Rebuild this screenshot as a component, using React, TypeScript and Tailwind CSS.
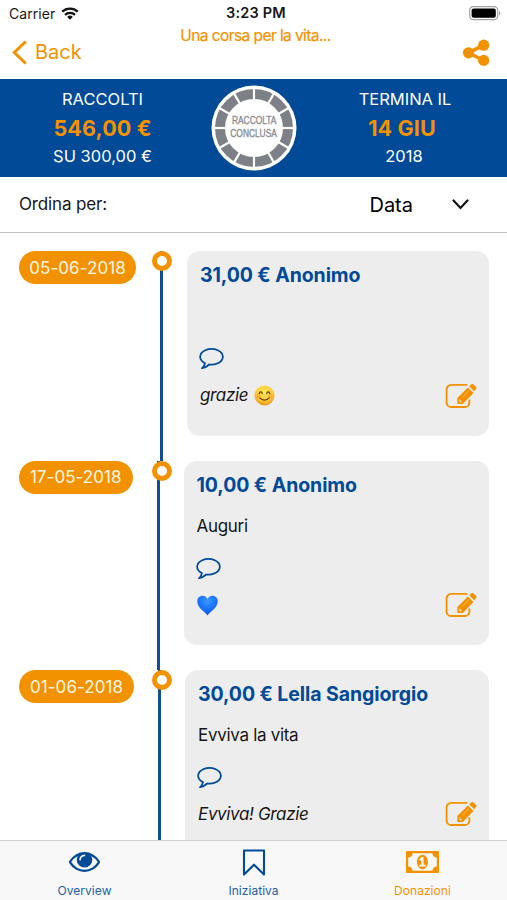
import React from 'react';

interface Donation {
  date: string;
  title: string;
  message?: string;
  reply: React.ReactNode;
  pillClass: string;
}

const WifiIcon = () => (
  <svg className="h-[13px] w-[18px]" viewBox="0 0 18 13" fill="none" stroke="#111" strokeWidth="2.3">
    <path d="M1.2 4.7a11.2 11.2 0 0 1 15.6 0" />
    <path d="M4 7.8a7.2 7.2 0 0 1 10 0" />
    <path d="M9 12.7 6.2 9.9a4 4 0 0 1 5.6 0z" fill="#111" stroke="none" />
  </svg>
);

const BatteryIcon = () => (
  <svg className="h-[15px] w-8" viewBox="0 0 32 15">
    <rect x=".7" y=".7" width="28" height="13" rx="3.6" fill="#fff" stroke="#a3a3a3" strokeWidth="1.2" />
    <rect x="2.6" y="2.6" width="24.2" height="9.2" rx="2" fill="#000" />
    <path d="M30 5v4.6c1.9-.8 1.9-3.8 0-4.6z" fill="#a3a3a3" />
  </svg>
);

const ShareIcon = () => (
  <svg className="h-7 w-7" viewBox="0 0 28 28" fill="#f39200">
    <path d="M21.6 6.2 6.6 13.8l15 7.7" fill="none" stroke="#f39200" strokeWidth="3.6" />
    <circle cx="6.5" cy="13.8" r="5.6" />
    <circle cx="21.7" cy="6.2" r="5.6" />
    <circle cx="21.7" cy="21.4" r="5.6" />
  </svg>
);

const CommentIcon = () => (
  <svg className="h-[21px] w-[25px]" viewBox="0 256 1792 1536" fill="#004a98">
    <path d="M896 384q-204 0-381.5 69.5t-282 187.5-104.5 255q0 112 71.5 213.5t201.5 175.5l87 50-27 96q-24 91-70 172 152-63 275-171l43-38 57 6q69 8 130 8 204 0 381.5-69.5t282-187.5 104.5-255-104.5-255-282-187.5-381.5-69.5zm896 512q0 174-120 321.5t-326 233-450 85.5q-70 0-145-8-198 175-460 242-49 14-114 22h-5q-15 0-27-10.5t-16-27.5v-1q-3-4-.5-12t2-10 4.5-9.5l6-9 7-8.5 8-9q7-8 31-34.5t34.5-38 31-39.5 32.5-51 27-59 26-76q-157-89-247.5-220t-90.5-281q0-174 120-321.5t326-233 450-85.5 450 85.5 326 233 120 321.5z" />
  </svg>
);

const EditIcon = () => (
  <svg className="h-[26px] w-8" viewBox="0 0 32 26" fill="none" stroke="#f39200">
    <path d="M21.5 1.9H6.2A4.6 4.6 0 0 0 1.6 6.5v12.9A4.6 4.6 0 0 0 6.2 24h13.6a4.6 4.6 0 0 0 4.6-4.6v-2.2" strokeWidth="1.9" strokeLinecap="round" />
    <path d="M12.3 20.9v-5.8L22.9 4.5l5.6 5.6-10.7 10.8z" fill="#f39200" stroke="none" />
    <path d="m24.2 3.3 1.9-1.9c.7-.7 1.8-.7 2.5 0l2.3 2.3c.7.7.7 1.8 0 2.5L29.2 8.3z" fill="#f39200" stroke="none" />
    <path d="m14.2 16.1 2.9 2.9-1.2.5-1.5-.8z" fill="#f7dfbb" stroke="none" />
    <path d="m17.4 14.2 6.6-6.6" stroke="#f9c078" strokeWidth=".8" />
  </svg>
);

const SmileEmoji = () => (
  <svg className="h-[21px] w-[21px]" viewBox="0 0 21 21">
    <defs>
      <radialGradient id="face" cx=".5" cy=".35" r=".65">
        <stop offset="0" stopColor="#ffe95c" />
        <stop offset=".65" stopColor="#ffca35" />
        <stop offset="1" stopColor="#eb9018" />
      </radialGradient>
    </defs>
    <circle cx="10.5" cy="10.5" r="10" fill="url(#face)" />
    <circle cx="4.4" cy="11.2" r="2.3" fill="#f88b3c" opacity=".45" />
    <circle cx="16.6" cy="11.2" r="2.3" fill="#f88b3c" opacity=".45" />
    <g fill="none" stroke="#6b3f12" strokeWidth="1.3" strokeLinecap="round">
      <path d="M5.2 8.6c.5-2.4 2.6-2.4 3.1 0M12.7 8.6c.5-2.4 2.6-2.4 3.1 0" />
      <path d="M5.8 12.9c2.4 3 7 3 9.4 0" />
    </g>
  </svg>
);

const HeartEmoji = () => (
  <svg className="h-[21px] w-[21px]" viewBox="0 0 21 21">
    <defs>
      <radialGradient id="heart" cx=".5" cy=".25" r=".75">
        <stop offset="0" stopColor="#3f98ff" />
        <stop offset=".6" stopColor="#1670fb" />
        <stop offset="1" stopColor="#1357d8" />
      </radialGradient>
    </defs>
    <path d="M10.5 20.5C8.6 17 .3 13.4.3 6.3.3 2.9 2.6.7 5.5.7c2.3 0 4 1.2 5 3.3 1-2.1 2.7-3.3 5-3.3 2.9 0 5.2 2.2 5.2 5.6 0 7.1-8.3 10.7-10.2 14.2z" fill="url(#heart)" />
  </svg>
);

const EyeIcon = () => (
  <svg className="h-5 w-[31px]" viewBox="0 384 1792 1152" fill="#004a98">
    <path d="M1664 960q-152-236-381-353 61 104 61 225 0 185-131.5 316.5t-316.5 131.5-316.5-131.5-131.5-316.5q0-121 61-225-229 117-381 353 133 205 333.5 326.5t434.5 121.5 434.5-121.5 333.5-326.5zm-720-384q0-20-14-34t-34-14q-125 0-214.5 89.5t-89.5 214.5q0 20 14 34t34 14 34-14 14-34q0-86 61-147t147-61q20 0 34-14t14-34zm848 384q0 34-20 69-140 230-376.5 368.5t-499.5 138.5-499.5-139-376.5-368q-20-35-20-69t20-69q140-229 376.5-368t499.5-139 499.5 139 376.5 368q20 35 20 69z" />
  </svg>
);

const BookmarkIcon = () => (
  <svg className="h-[27px] w-6" viewBox="0 0 24 27" fill="none" stroke="#004a98" strokeWidth="2.1" strokeLinejoin="round">
    <path d="M2 1.5h20v24L12 15.7 2 25.5z" />
  </svg>
);

const MoneyIcon = () => (
  <svg className="h-[22px] w-[33px]" viewBox="0 256 1920 1280" fill="#f39200">
    <path d="M768 1152h384v-96h-128v-448h-114l-148 137 77 80q42-37 55-57h2v288h-128v96zm512-256q0 70-21 142t-59.5 134-101.5 101-138 39-138-39-101.5-101-59.5-134-21-142 21-142 59.5-134 101.5-101 138-39 138 39 101.5 101 59.5 134 21 142zm512 256v-512q-106 0-181-75t-75-181h-1152q0 106-75 181t-181 75v512q106 0 181 75t75 181h1152q0-106 75-181t181-75zm128-832v1152q0 26-19 45t-45 19h-1792q-26 0-45-19t-19-45v-1152q0-26 19-45t45-19h1792q26 0 45 19t19 45z" />
  </svg>
);

const StatusBadge = () => (
  <div className="relative h-[86px] w-[86px]">
    <svg className="h-full w-full" viewBox="0 0 86 86">
      <circle cx="43" cy="43" r="42.5" fill="#fff" />
      <circle cx="43" cy="43" r="34" fill="none" stroke="#7d8187" strokeWidth="10" />
      {Array.from({ length: 12 }, (_, i) => (
        <path key={i} d="M43 3v14" stroke="#fff" strokeWidth="2.2" transform={`rotate(${i * 30} 43 43)`} />
      ))}
    </svg>
    <div className="absolute inset-0 flex flex-col items-center justify-center pb-0.5 font-['Liberation_Sans_Narrow','Liberation_Sans',sans-serif] text-[11px] leading-[13px] text-[#8b8e93]">
      <span className="scale-x-[0.76] whitespace-nowrap [-webkit-text-stroke:0.4px_#8b8e93]">RACCOLTA</span>
      <span className="scale-x-[0.76] whitespace-nowrap [-webkit-text-stroke:0.4px_#8b8e93]">CONCLUSA</span>
    </div>
  </div>
);

const donations: Donation[] = [
  {
    date: '05-06-2018',
    title: '31,00 € Anonimo',
    reply: <><span>grazie</span><SmileEmoji /></>,
    pillClass: 'w-[117px]',
  },
  {
    date: '17-05-2018',
    title: '10,00 € Anonimo',
    message: 'Auguri',
    reply: <HeartEmoji />,
    pillClass: 'w-[113.5px]',
  },
  {
    date: '01-06-2018',
    title: '30,00 € Lella Sangiorgio',
    message: 'Evviva la vita',
    reply: 'Evviva! Grazie',
    pillClass: 'w-[115px]',
  },
];

const DonationRow: React.FC<{ donation: Donation }> = ({ donation }) => (
  <li className="relative flex h-[209.3px] shrink-0 items-start pl-[19px] pr-[18px]">
    <span className={`flex h-[33px] shrink-0 items-center justify-center rounded-full bg-[#f39200] pt-0.5 text-[17px] tracking-[0.05px] text-[#fff6e6] ${donation.pillClass}`}>
      {donation.date}
    </span>
    <div className="ml-6 flex h-full flex-1 border-l-[3px] border-[#10508f] pl-6">
      <article className="flex h-[184.5px] flex-1 flex-col rounded-[13px] bg-[#ededed] px-3">
        <h2 className="mt-3 h-6 pl-px text-[19.5px] font-bold leading-6 tracking-[-0.08px] whitespace-nowrap text-[#004a98]">{donation.title}</h2>
        <p className="mt-[17px] h-6 pl-px text-[17px] leading-6 tracking-[-0.3px] text-[#161616]">{donation.message}</p>
        <div className="mt-5 h-[21px]"><CommentIcon /></div>
        <div className="mt-[13px] flex h-[27px] items-center justify-between text-[17px] italic tracking-[-0.35px] text-[#161616]">
          <span className="flex items-center gap-1.5 pl-px">{donation.reply}</span>
          <EditIcon />
        </div>
      </article>
    </div>
    <span className="absolute left-[151.5px] top-0 h-5 w-5 rounded-full border-[5px] border-[#f39200] bg-white" />
  </li>
);

const App: React.FC = () => (
  <div className="flex h-[900px] w-[507px] flex-col overflow-hidden bg-white font-['Inter',sans-serif] text-[#161616]">
    <header className="h-[79px] shrink-0">
      <div className="grid h-[26px] grid-cols-3 items-center pl-[9px] pr-[6px] text-[14px]">
        <span className="flex items-center gap-1.5"><span className="tracking-[0.05px]">Carrier</span><WifiIcon /></span>
        <span className="pl-0.5 text-center text-[14.5px] font-semibold tracking-[0.2px]">3:23 PM</span>
        <span className="flex justify-end"><BatteryIcon /></span>
      </div>
      <div className="grid h-[53px] grid-cols-[1fr_160px_1fr] pl-3 pr-[17px]">
        <button className="flex h-[52px] items-center gap-2 text-[20px] text-[#f39200]">
          <svg className="h-[25px] w-[15px]" viewBox="0 0 15 25" fill="none" stroke="#f39200" strokeWidth="3">
            <path d="M13.8 1.5 2.3 12.5l11.5 11" />
          </svg>
          Back
        </button>
        <h1 className="pl-[9px] text-center text-[15.5px] leading-[19px] tracking-[-0.58px] whitespace-nowrap text-[#f39200] [-webkit-text-stroke:0.2px_#f39200]">Una corsa per la vita...</h1>
        <button className="flex h-[54px] items-center justify-end"><ShareIcon /></button>
      </div>
    </header>

    <section className="grid h-[98px] shrink-0 grid-cols-[205px_98px_202px] bg-[#004a98] text-center text-[16.5px] text-white">
      <div className="pt-[11px]">
        <p className="h-[19px] leading-[19px]">RACCOLTI</p>
        <p className="mt-1.5 h-[26px] text-[21.5px] font-bold leading-[26px] tracking-[0.15px] text-[#f39200]">546,00 €</p>
        <p className="mt-1.5 h-[19px] leading-[19px]">SU 300,00 €</p>
      </div>
      <div className="flex items-center justify-center"><StatusBadge /></div>
      <div className="pt-[11px]">
        <p className="h-[19px] pl-0.5 leading-[19px]">TERMINA IL</p>
        <p className="mt-1.5 h-[26px] pr-1 text-[21.5px] font-bold leading-[26px] tracking-[0.15px] text-[#f39200]">14 GIU</p>
        <p className="mt-1.5 h-[19px] leading-[19px]">2018</p>
      </div>
    </section>

    <section className="flex h-[56px] shrink-0 items-center justify-between border-b border-[#c4c4c4] pl-[19px] pr-[38px]">
      <span className="text-[17px] tracking-[-0.15px]">Ordina per:</span>
      <span className="flex items-center gap-[39px] text-[20px] text-black">
        Data
        <svg className="h-[11px] w-[17px]" viewBox="0 0 17 11" fill="none" stroke="#111" strokeWidth="2.2" strokeLinecap="round">
          <path d="m1.5 1.5 7 7.5 7-7.5" />
        </svg>
      </span>
    </section>

    <ul className="flex min-h-0 flex-1 flex-col overflow-hidden pt-[18.3px]">
      {donations.map((d) => <DonationRow key={d.date} donation={d} />)}
    </ul>

    <nav className="grid h-[60px] shrink-0 grid-cols-3 border-t border-[#cfcfcf] bg-[#f8f8f8] text-[12px] leading-4 tracking-[0.05px] text-[#1f5fa6]">
      <a className="flex flex-col items-center"><span className="flex h-[42px] items-center"><EyeIcon /></span>Overview</a>
      <a className="flex flex-col items-center"><span className="flex h-[42px] items-center"><BookmarkIcon /></span>Iniziativa</a>
      <a className="flex flex-col items-center text-[#f39200]"><span className="flex h-[42px] items-center"><MoneyIcon /></span>Donazioni</a>
    </nav>
  </div>
);

export default App;
